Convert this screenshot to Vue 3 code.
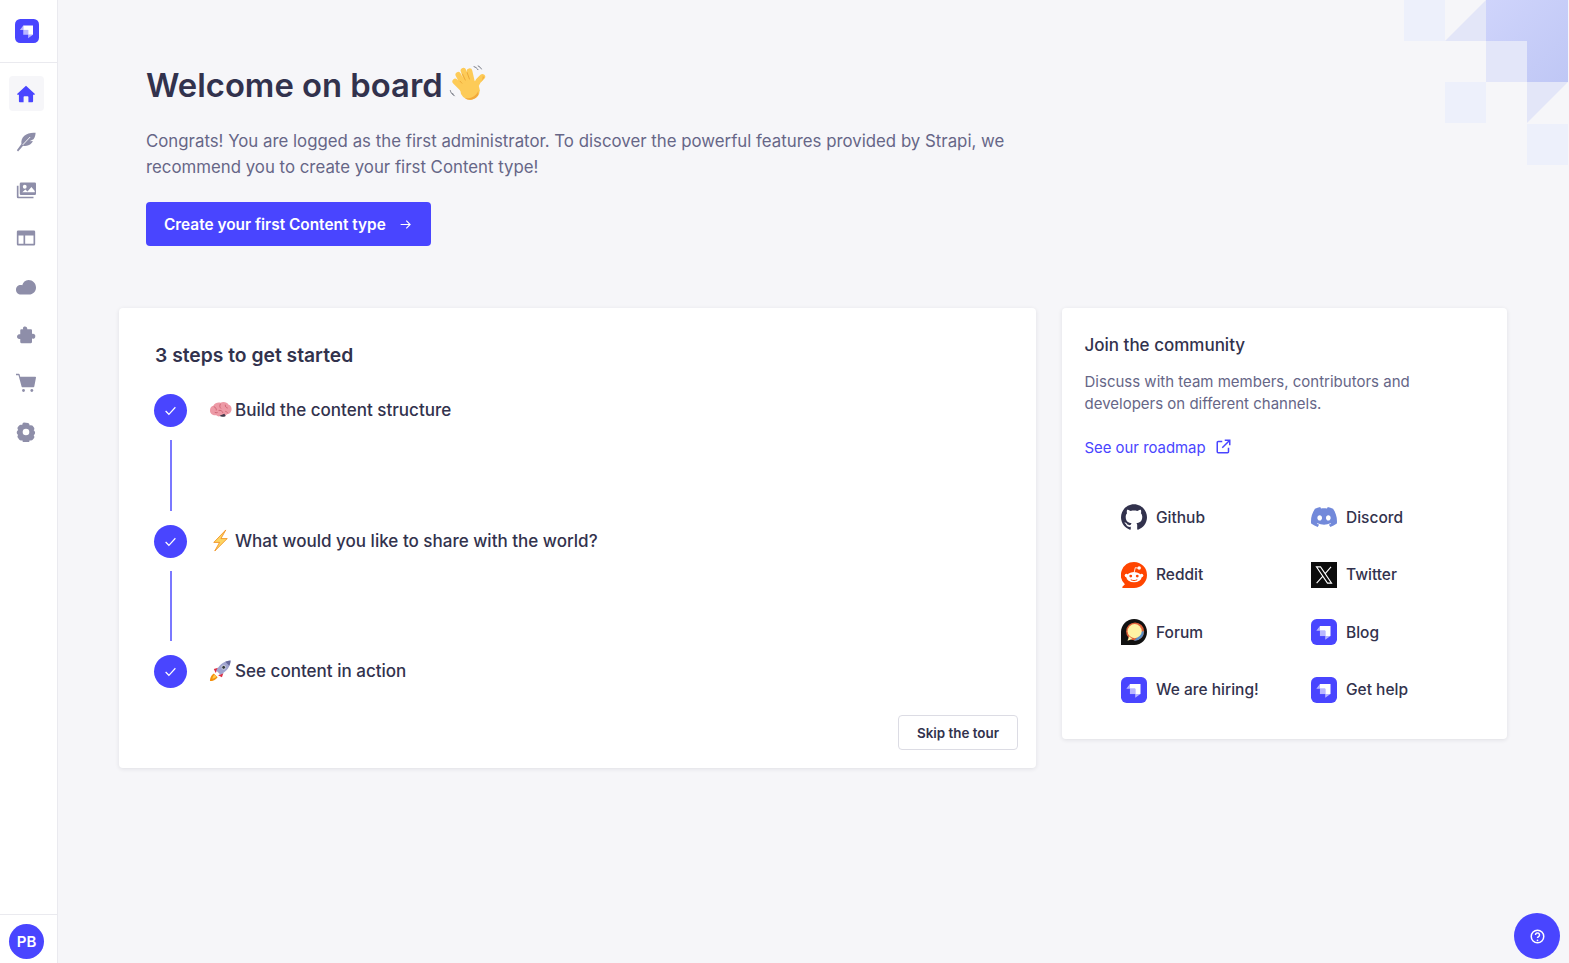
<script setup>
const navIcons = ['home', 'feather', 'images', 'layout', 'cloud', 'puzzle', 'cart', 'cog']
const steps = [
  { emoji: 'brain', text: 'Build the content structure' },
  { emoji: 'bolt', text: 'What would you like to share with the world?' },
  { emoji: 'rocket', text: 'See content in action' }
]
const links = [
  { icon: 'github', label: 'Github' },
  { icon: 'discord', label: 'Discord' },
  { icon: 'reddit', label: 'Reddit' },
  { icon: 'x', label: 'Twitter' },
  { icon: 'forum', label: 'Forum' },
  { icon: 'strapi', label: 'Blog' },
  { icon: 'strapi', label: 'We are hiring!' },
  { icon: 'strapi', label: 'Get help' }
]
</script>

<template>
  <div class="app">
    <aside class="sidebar">
      <div class="brand">
        <svg class="logo" viewBox="0 0 32 32">
          <rect width="32" height="32" rx="7" fill="#4945ff" />
          <path d="M24 8.500H11v6h6.500V21H24z" fill="#fff" />
          <path d="M11 14.500H6.500L11 8.500zM17.500 21v4.500L24 21z" fill="#fff" opacity=".6" />
          <rect x="11" y="14.500" width="6.500" height="6.500" fill="#b9b7ff" />
        </svg>
      </div>
      <nav class="nav">
        <a v-for="(n, i) in navIcons" :key="n" class="nav-item" :class="{ active: i === 0 }">
          <svg class="nav-icon" viewBox="0 0 24 24">
            <path v-if="n === 'home'" d="M12 2.200 1.600 11.600c-.5.5-.2 1.400.6 1.400h1.300v7.600c0 .8.600 1.400 1.400 1.400h4.200v-6.400c0-.6.400-1 1-1h3.800c.6 0 1 .4 1 1V22h4.200c.8 0 1.400-.6 1.400-1.400V13h1.300c.8 0 1.100-.9.600-1.400z" />
            <g v-else-if="n === 'feather'">
              <path d="M23.500 1c-5-.5-10 .5-13.500 3.500C7 7 6 10.500 6.500 14.500L1 22l1.500 1.300 6-6.800c3.500.8 7.500-.3 10-3 .8-.9 1.300-1.700 1.700-2.800l-4 .5 4.800-2.500C22.800 6.500 23.500 3.500 23.500 1z" />
              <path d="M8 15.500 17 6" fill="none" stroke="#fff" stroke-width="1.100" />
            </g>
            <g v-else-if="n === 'images'">
              <path d="M6 3h16.500A1.500 1.500 0 0 1 24 4.500v12a1.500 1.500 0 0 1-1.500 1.500H6a1.500 1.500 0 0 1-1.500-1.500v-12A1.500 1.500 0 0 1 6 3zm1.500 11.800h15v-1.600l-4-4.800-4.700 5.300-2.600-2.400zM10.500 5.800a2.300 2.300 0 1 0 0 4.600 2.300 2.300 0 0 0 0-4.600z" fill-rule="evenodd" />
              <path d="M1 7h2v12.500c0 .3.200.5.500.5H21v2H2.500A1.500 1.500 0 0 1 1 20.500z" />
            </g>
            <path v-else-if="n === 'layout'" d="M2.500 3h19A1.500 1.500 0 0 1 23 4.500v15a1.500 1.500 0 0 1-1.500 1.500h-19A1.500 1.500 0 0 1 1 19.500v-15A1.500 1.500 0 0 1 2.500 3zM3 9v10h6V9zm8 0v10h10V9z" fill-rule="evenodd" />
            <path v-else-if="n === 'cloud'" d="M6 21C2.500 21 0 18.500 0 15.200 0 12 2.500 9.600 5.500 9.600c1 0 1.500.2 2 .4C8.500 6 11 3.500 15 3.500c5 0 9 4 9 9 0 4.500-3.500 8.500-8.500 8.500z" />
            <path v-else-if="n === 'puzzle'" d="M9 2.500c2.200-1.500 5 .2 4.500 2.700h4.300c.8 0 1.400.6 1.400 1.400v4.100c2.500-.7 4.800 1.300 3.800 3.900-.7 1.700-2.300 2.200-3.800 1.700v4.200c0 .8-.6 1.400-1.400 1.400H6.500c-.8 0-1.400-.6-1.400-1.400v-3.700C2.500 17.500.5 15.200 1.400 13c.7-1.700 2.200-2.200 3.700-1.800V6.600c0-.8.600-1.400 1.400-1.400h2.100C8.200 4.200 8.200 3.100 9 2.500z" />
            <g v-else-if="n === 'cart'">
              <path d="M0 1h3.200c.6 0 1 .4 1.200.9L5 4.500h18.200c.5 0 .9.500.8 1l-2 10.300c-.1.700-.7 1.200-1.400 1.200H8c-.7 0-1.300-.5-1.400-1.200L3 2.800H0z" />
              <circle cx="9" cy="21" r="1.700" /><circle cx="19" cy="21" r="1.700" />
            </g>
            <path v-else d="M14.300 1.200c1 .3 1.700 1 1.900 2l.2 1 .9-.3c1-.3 2 0 2.700.7l1.500 1.900c.6.800.7 1.900.2 2.700l-.5.800.7.600c.8.700 1 1.500 1 2.400s-.3 1.700-1 2.400l-.7.600.5.800c.5.800.4 1.900-.2 2.700l-1.500 1.900c-.7.700-1.700 1-2.700.7l-.9-.3-.2 1c-.2 1-.9 1.700-1.900 2h-4.600c-1-.3-1.700-1-1.900-2l-.2-1-.9.300c-1 .3-2 0-2.700-.7L2.300 19c-.6-.8-.7-1.900-.2-2.700l.5-.8-.7-.6c-.8-.7-1-1.500-1-2.400s.2-1.700 1-2.400l.7-.6-.5-.8c-.5-.8-.4-1.900.2-2.700l1.500-1.900c.7-.7 1.700-1 2.700-.7l.9.3.2-1c.2-1 .9-1.700 1.900-2zM12 8a4 4 0 1 0 0 8 4 4 0 0 0 0-8z" fill-rule="evenodd" />
          </svg>
        </a>
      </nav>
      <div class="user"><span class="avatar">PB</span></div>
    </aside>

    <main class="main">
      <section class="hero">
        <h1 class="title">
          Welcome on board
          <svg class="wave" viewBox="0 0 36 36">
            <g fill="none" stroke="#fdcb58" stroke-width="5.400" stroke-linecap="round">
              <path d="M14 24 6 16M15 21 9 9.500M19 20 14 5.500M23 19 20 6M25 22l3.500-6.500 4-4" />
            </g>
            <circle cx="20.500" cy="24.500" r="9.500" fill="#fdcb58" />
            <path d="M28.500 29.500a9.500 9.500 0 0 1-13 2.800c5 .5 10-1 13-7zM31 17l3-4.500-1-2.500-.5 4z" fill="#f2a93b" />
            <path d="M10.500 15.500 12.800 18M13 8.500 16 15M17.500 7 20 14" stroke="#e59a2c" stroke-width=".7" fill="none" />
            <path d="M24 1.500c2 .6 3.300 1.500 4.400 3.400M28 .8c1.700.7 2.800 1.700 3.700 3.400M1.200 24.500c.4 2 1.400 3.400 3 4.700M3.500 27.500c.4 1.200 1 2 2 2.800" fill="none" stroke="#5c5f6b" stroke-width=".8" />
          </svg>
        </h1>
        <p class="lead">Congrats! You are logged as the first administrator. To discover the powerful features provided by Strapi, we recommend you to create your first Content type!</p>
        <a class="cta">
          Create your first Content type
          <svg class="arrow" viewBox="0 0 24 24"><path d="M3 12h17M13.500 5l7 7-7 7" fill="none" stroke="#fff" stroke-width="2" /></svg>
        </a>
      </section>

      <div class="columns">
        <section class="card steps-card">
          <h2 class="steps-title">3 steps to get started</h2>
          <ol class="steps">
            <li v-for="(s, i) in steps" :key="s.text" class="step">
              <div class="rail">
                <span class="dot">
                  <svg viewBox="0 0 24 24" class="check"><path d="M3 13l6 6L21 6" fill="none" stroke="#fff" stroke-width="2.200" /></svg>
                </span>
                <span v-if="i < steps.length - 1" class="line"></span>
              </div>
              <div class="step-label">
                <svg class="emoji" viewBox="0 0 24 24">
                  <g v-if="s.emoji === 'brain'">
                    <path d="M1 13c0-3 1.500-4.500 3.500-5C6 5 10 4 12 5c3-1.500 7-.5 8.500 2 2 .5 3.500 2.500 3 5.500-.5 2.500-2 4-4.500 4.500-2 2-5 2.500-7 1.500-1 1-3 1-4.500-.5C4 18.500 1 16.500 1 13z" fill="#ed9aa6" />
                    <path d="M5 9c2 1 3 2 2.500 4M12 6c-1 2-1 3.500.5 5M17 7c0 2 .5 3 2.500 3.500M10 13c2-.5 4 .5 4.500 2.500M17 14c1 0 2 .5 2.500 2M6 15c1 .5 2 .5 3 0" fill="none" stroke="#c9606f" stroke-width=".9" />
                    <path d="M11 18.500c1.500 1.500 4.500 1.500 6.500.2l-1.500-2.200z" fill="#40394a" />
                  </g>
                  <g v-else-if="s.emoji === 'bolt'">
                    <path d="M17.500 1 5 14h6L6 23l13-13h-6.500z" fill="#fcd462" stroke="#f19020" stroke-width=".9" />
                  </g>
                  <g v-else>
                    <path d="M1 23c0-3 1-6 4-8l4 4c-2 3-5 4-8 4z" fill="#f4900c" />
                    <path d="M3.500 20.500c.3-1.500 1-3 2.200-4l2 2c-1 1.200-2.500 1.900-4.200 2z" fill="#ffcc4d" />
                    <path d="M5 10.500 9.500 9 7 14.500zM13.500 19 15 14.500 9.500 17z" fill="#dd2e44" />
                    <path d="M22.500 1.500c-6 .3-10.500 3-15 10.500l4.500 4.500c7.500-4.500 10.200-9 10.500-15z" fill="#a0a4cf" />
                    <path d="M22.500 1.500c-2 .1-3.800.5-5.500 1.400L21.100 7c.9-1.700 1.300-3.500 1.400-5.500z" fill="#66699c" />
                    <circle cx="15.300" cy="8.700" r="2" fill="#31373d" stroke="#e8eaf5" stroke-width=".8" />
                  </g>
                </svg>
                <span>{{ s.text }}</span>
              </div>
            </li>
          </ol>
          <div class="skip-row"><button class="skip">Skip the tour</button></div>
        </section>

        <section class="card community">
          <h2 class="community-title">Join the community</h2>
          <p class="community-text">Discuss with team members, contributors and developers on different channels.</p>
          <a class="roadmap">
            See our roadmap
            <svg class="external" viewBox="0 0 24 24">
              <path d="M10 4H3.500A1.500 1.500 0 0 0 2 5.500v15A1.500 1.500 0 0 0 3.500 22h15a1.500 1.500 0 0 0 1.500-1.500V14M10 14 22 2M14 2h8v8" fill="none" stroke="#4945ff" stroke-width="2.400" />
            </svg>
          </a>
          <div class="links">
            <a v-for="l in links" :key="l.label + l.icon" class="link">
              <svg class="link-icon" viewBox="0 0 24 24">
                <path v-if="l.icon === 'github'" fill="#32324d" d="M12 .297c-6.630 0-12 5.373-12 12 0 5.303 3.438 9.800 8.205 11.385.6.113.82-.258.82-.577 0-.285-.01-1.040-.015-2.040-3.338.724-4.042-1.610-4.042-1.610C4.422 18.070 3.633 17.700 3.633 17.700c-1.087-.744.084-.729.084-.729 1.205.084 1.838 1.236 1.838 1.236 1.070 1.835 2.809 1.305 3.495.998.108-.776.417-1.305.76-1.605-2.665-.3-5.466-1.332-5.466-5.930 0-1.310.465-2.380 1.235-3.220-.135-.303-.54-1.523.105-3.176 0 0 1.005-.322 3.300 1.230.96-.267 1.980-.399 3-.405 1.020.006 2.040.138 3 .405 2.280-1.552 3.285-1.230 3.285-1.230.645 1.653.24 2.873.12 3.176.765.840 1.230 1.910 1.230 3.220 0 4.610-2.805 5.625-5.475 5.920.42.36.81 1.096.81 2.220 0 1.606-.015 2.896-.015 3.286 0 .315.21.69.825.57C20.565 22.092 24 17.592 24 12.297c0-6.627-5.373-12-12-12" />
                <path v-else-if="l.icon === 'discord'" fill="#7289da" d="M20.317 4.370a19.790 19.790 0 0 0-4.885-1.515.074.074 0 0 0-.079.037c-.211.375-.445.865-.608 1.250-1.845-.276-3.680-.276-5.487 0-.164-.393-.406-.874-.618-1.250a.077.077 0 0 0-.079-.037 19.740 19.740 0 0 0-4.885 1.515.07.07 0 0 0-.032.028C.533 9.046-.319 13.580.099 18.058a.082.082 0 0 0 .031.056c2.053 1.508 4.041 2.423 5.993 3.030a.078.078 0 0 0 .084-.028c.462-.63.873-1.295 1.226-1.994a.076.076 0 0 0-.042-.106c-.653-.248-1.274-.55-1.872-.892a.077.077 0 0 1-.008-.128c.126-.094.252-.192.372-.291a.074.074 0 0 1 .078-.011c3.928 1.794 8.180 1.794 12.061 0a.074.074 0 0 1 .079.01c.12.099.246.198.373.292a.077.077 0 0 1-.007.128c-.598.349-1.220.645-1.873.891a.077.077 0 0 0-.041.107c.36.698.772 1.363 1.225 1.993a.076.076 0 0 0 .084.029c1.961-.607 3.950-1.522 6.002-3.030a.077.077 0 0 0 .031-.055c.5-5.177-.838-9.674-3.548-13.660a.061.061 0 0 0-.031-.029zM8.020 15.331c-1.183 0-2.157-1.086-2.157-2.419 0-1.333.956-2.419 2.157-2.419 1.211 0 2.176 1.095 2.157 2.419 0 1.333-.956 2.419-2.157 2.419zm7.975 0c-1.183 0-2.157-1.086-2.157-2.419 0-1.333.955-2.419 2.157-2.419 1.211 0 2.176 1.095 2.157 2.419 0 1.333-.946 2.419-2.157 2.419z" />
                <g v-else-if="l.icon === 'reddit'">
                  <path d="M12 0a12 12 0 0 1 0 24H1.800c-.6 0-.9-.7-.5-1.100l2.300-2.300A12 12 0 0 1 12 0z" fill="#ff4500" />
                  <ellipse cx="12" cy="14" rx="7" ry="4.800" fill="#fff" />
                  <circle cx="5" cy="12.500" r="1.600" fill="#fff" /><circle cx="19" cy="12.500" r="1.600" fill="#fff" />
                  <circle cx="16.800" cy="5.500" r="1.600" fill="#fff" />
                  <path d="M12.200 9.500 13.200 5.200 16.500 5.800" fill="none" stroke="#fff" stroke-width=".8" />
                  <circle cx="9" cy="13" r="1.300" fill="#ff4500" /><circle cx="15" cy="13" r="1.300" fill="#ff4500" />
                  <path d="M9 16.300c1.700 1.100 4.300 1.100 6 0" fill="none" stroke="#ff4500" stroke-width=".9" />
                </g>
                <g v-else-if="l.icon === 'x'">
                  <rect width="24" height="24" fill="#0c0c0c" />
                  <path d="M5 4.500h3.800l10.200 15h-3.800zM18.500 4.500l-5.600 6.500M10.800 13.200 5.200 19.500" fill="none" stroke="#fff" stroke-width="1" />
                </g>
                <g v-else-if="l.icon === 'forum'">
                  <path d="M12.200 0C5.500 0 0 5.300 0 12v12h12.200C18.900 24 24 18.500 24 12S18.900 0 12.200 0z" fill="#111" />
                  <circle cx="13" cy="11.500" r="8.300" fill="#e0623a" />
                  <path d="M12 20a8.300 8.300 0 0 0 9-9l-3 1-4 6z" fill="#5a90c8" />
                  <circle cx="12.600" cy="11.200" r="6.500" fill="#fff3a4" />
                  <path d="M6 20l1.500-4 3 2.500z" fill="#fff3a4" />
                </g>
                <g v-else transform="scale(.75)">
                  <rect width="32" height="32" rx="7" fill="#4945ff" />
                  <path d="M24 8.500H11v6h6.500V21H24z" fill="#fff" />
                  <path d="M11 14.500H6.500L11 8.500zM17.500 21v4.500L24 21z" fill="#fff" opacity=".6" />
                  <rect x="11" y="14.500" width="6.500" height="6.500" fill="#b9b7ff" />
                </g>
              </svg>
              <span>{{ l.label }}</span>
            </a>
          </div>
        </section>
      </div>
    </main>

    <svg class="decor" viewBox="0 0 166 165" aria-hidden="true">
      <defs>
        <linearGradient id="decorStrong" x1="0" y1="0" x2="1" y2="1">
          <stop offset="0" stop-color="#cfd4fb" />
          <stop offset="1" stop-color="#bfc7f5" />
        </linearGradient>
      </defs>
      <rect x="1" y="0" width="41" height="41" fill="#edf0fb" />
      <path d="M42 41 83 0v41z" fill="#e3e6f8" />
      <path d="M83 0h82v82h-41V41H83z" fill="url(#decorStrong)" />
      <rect x="83" y="41" width="41" height="41" fill="#e3e6f9" />
      <rect x="42" y="82" width="41" height="41" fill="#edf0fb" />
      <path d="M124 82h41l-41 41z" fill="#e3e6f8" />
      <rect x="124" y="124" width="41" height="41" fill="#edf0fb" />
    </svg>

    <button class="help" aria-label="Help">
      <svg viewBox="0 0 24 24" class="help-icon">
        <circle cx="12" cy="12" r="10" fill="none" stroke="#fff" stroke-width="2.400" />
        <path d="M8.800 9.500a3.200 3.200 0 1 1 4.900 2.700c-1.100.7-1.700 1.200-1.700 2.300" fill="none" stroke="#fff" stroke-width="2.400" />
        <circle cx="12" cy="18" r="1.400" fill="#fff" />
      </svg>
    </button>
  </div>
</template>

<style scoped>
.app {
  position: relative;
  display: flex;
  width: 100%;
  height: 963px;
  overflow: hidden;
  background: #f6f6f9;
  color: #32324d;
  font-family: Inter, "Liberation Sans", sans-serif;
}
.sidebar {
  display: flex;
  flex-direction: column;
  flex: 0 0 58px;
  box-sizing: border-box;
  background: #fff;
  border-right: 1px solid #eaeaef;
}
.brand {
  display: flex;
  align-items: center;
  justify-content: center;
  box-sizing: border-box;
  height: 63px;
  padding-right: 3px;
  border-bottom: 1px solid #eaeaef;
}
.logo { width: 24px; height: 24px; }
.nav {
  display: flex;
  flex: 1;
  flex-direction: column;
  gap: 13.300px;
  padding: 13px 0 0 9px;
}
.nav-item {
  display: flex;
  align-items: center;
  justify-content: center;
  width: 35px;
  height: 35px;
  border-radius: 4px;
}
.nav-item.active { background: #f6f6f9; }
.nav-icon { width: 20px; height: 20px; margin-left: -1px; fill: #8e8ea9; }
.nav-item.active .nav-icon { fill: #4945ff; }
.user {
  display: flex;
  box-sizing: border-box;
  height: 49px;
  padding: 9px 0 0 9px;
  border-top: 1px solid #eaeaef;
}
.avatar {
  display: flex;
  align-items: center;
  justify-content: center;
  width: 35px;
  height: 35px;
  border-radius: 50%;
  background: #4945ff;
  color: #fff;
  font-size: 15px;
  font-weight: 600;
}
.main { flex: 1; min-width: 0; padding: 0 62px 0 61px; }
.hero { padding: 62px 0 0 27px; }
.title {
  display: flex;
  align-items: center;
  gap: 6px;
  margin: 0;
  font-size: 32.800px;
  line-height: 46px;
  font-weight: 600;
}
.wave { width: 37px; height: 37px; margin-top: -3px; }
.lead {
  width: 880px;
  margin: 20px 0 0;
  color: #666687;
  font-size: 16.820px;
  line-height: 26px;
}
.cta {
  display: inline-flex;
  align-items: center;
  gap: 13px;
  box-sizing: border-box;
  height: 44px;
  margin-top: 22px;
  padding: 0 19px 0 18px;
  border-radius: 4px;
  background: #4945ff;
  color: #fff;
  font-size: 15.400px;
  font-weight: 600;
}
.arrow { width: 13px; height: 13px; }
.columns {
  display: grid;
  grid-template-columns: 917px 445px;
  gap: 26px;
  align-items: start;
  margin-top: 62px;
}
.card {
  box-sizing: border-box;
  border-radius: 4px;
  background: #fff;
  box-shadow: 0 1px 4px rgba(33, 33, 52, 0.1);
}
.steps-card { height: 460px; padding: 33px 18px 18px 35px; display: flex; flex-direction: column; }
.steps-title { margin: 0 0 0 1px; font-size: 19.300px; line-height: 28px; font-weight: 600; }
.steps { flex: 1; margin: 25px 0 0; padding: 0; list-style: none; }
.step { display: flex; gap: 22px; }
.rail { display: flex; flex-direction: column; align-items: center; width: 33px; }
.dot {
  display: flex;
  align-items: center;
  justify-content: center;
  width: 33px;
  height: 33px;
  border-radius: 50%;
  background: #4945ff;
}
.check { width: 13px; height: 13px; }
.line { width: 2px; height: 70.700px; margin: 13px 0 14px; background: #7b79ff; }
.step-label {
  display: flex;
  align-items: center;
  gap: 3px;
  height: 31px;
  font-size: 17.050px;
  font-weight: 500;
}
.emoji { width: 23px; height: 23px; }
.skip-row { display: flex; justify-content: flex-end; }
.skip {
  box-sizing: border-box;
  width: 120px;
  height: 35px;
  border: 1px solid #dcdce4;
  border-radius: 4px;
  background: #fff;
  color: #32324d;
  font-family: inherit;
  font-size: 13.400px;
  font-weight: 600;
}
.community { height: 431px; padding: 24px 22.500px; }
.community-title { margin: 0; font-size: 17px; line-height: 26px; font-weight: 500; }
.community-text {
  width: 340px;
  margin: 13px 0 0;
  color: #666687;
  font-size: 15px;
  line-height: 22px;
}
.roadmap {
  display: inline-flex;
  align-items: center;
  gap: 10px;
  margin-top: 22px;
  color: #4945ff;
  font-size: 14.900px;
  line-height: 22px;
}
.external { width: 15px; height: 15px; margin-top: -3px; }
.links {
  display: grid;
  grid-template-columns: 190px 190px;
  grid-auto-rows: 26px;
  row-gap: 31.500px;
  margin-top: 45px;
  padding-left: 36.500px;
}
.link {
  display: flex;
  align-items: center;
  gap: 9px;
  font-size: 15.500px;
  font-weight: 500;
}
.link-icon { width: 26px; height: 26px; flex: none; }
.decor { position: absolute; top: 0; right: 0; width: 166px; height: 165px; }
.help {
  position: absolute;
  right: 9px;
  bottom: 4px;
  display: flex;
  align-items: center;
  justify-content: center;
  width: 46px;
  height: 46px;
  padding: 0;
  border: 0;
  border-radius: 50%;
  background: #4945ff;
}
.help-icon { width: 15px; height: 15px; }
</style>

<style>
html, body { margin: 0; background: #f6f6f9; }
</style>
